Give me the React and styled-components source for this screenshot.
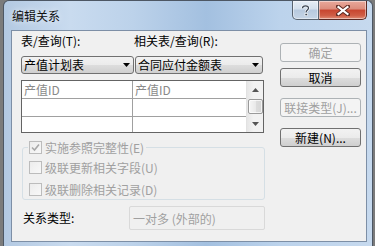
import React from "react";
import styled, { createGlobalStyle } from "styled-components";

const GlobalStyle = createGlobalStyle`
  html, body {
    margin: 0;
    padding: 0;
    width: 375px;
    height: 246px;
    overflow: hidden;
    background: #7b7b7b;
  }
  body {
    font-family: "Noto Sans CJK SC", "Liberation Sans", sans-serif;
    font-size: 12px;
    color: #000;
  }
  * { box-sizing: border-box; }
`;

const FONT = `"Noto Sans CJK SC", "Liberation Sans", sans-serif`;

const Window = styled.div`
  margin-left: 3px;
  width: 370px;
  height: 246px;
  border: 1px solid #4d5764;
  border-bottom: none;
  border-radius: 6px 6px 0 0;
  background: linear-gradient(
    to right,
    #b3c9e2 0%,
    #c9dbef 18%,
    #bcd2ea 35%,
    #a3c0e0 55%,
    #bcd3ec 75%,
    #c6d9ee 100%
  );
  display: flex;
  flex-direction: column;
  padding: 0 5px 0 7px;
`;

const TitleBar = styled.div`
  height: 29px;
  display: flex;
  align-items: flex-start;
  justify-content: space-between;
`;

const Title = styled.div`
  margin-top: 8px;
  margin-left: 1px;
  font-family: ${FONT};
  font-size: 12px;
  line-height: 14px;
  color: #111;
  text-shadow: 0 0 6px rgba(255, 255, 255, 0.9);
`;

const CaptionButtons = styled.div`
  display: flex;
  height: 19px;
`;

const CaptionButton = styled.div`
  width: ${(p) => p.$w}px;
  height: 19px;
  display: flex;
  align-items: center;
  justify-content: center;
  border: 1px solid ${(p) => (p.$close ? "#5a2a24" : "#59636f")};
  border-top: none;
  border-left: ${(p) => (p.$close ? "none" : undefined)};
  border-radius: ${(p) => (p.$close ? "0 0 5px 0" : "0 0 0 5px")};
  background: ${(p) =>
    p.$close
      ? "linear-gradient(to bottom, #e9a99b 0%, #dc8c7c 45%, #c8452f 50%, #cf5d45 80%, #e08d76 100%)"
      : "linear-gradient(to bottom, #e6edf5 0%, #d3dfec 45%, #b7c9de 50%, #c6d5e6 100%)"};
  box-shadow: inset 0 0 0 1px rgba(255, 255, 255, 0.45);
`;

const Client = styled.div`
  flex: 1;
  display: grid;
  grid-template-columns: 244px 81px;
  column-gap: 15px;
  align-items: start;
  padding-left: 9px;
  background: #f0f0f0;
  border: 1px solid #7d8fa6;
`;

const LeftColumn = styled.div`
  display: flex;
  flex-direction: column;
`;

const LabelRow = styled.div`
  height: 25px;
  padding-top: 3px;
  display: grid;
  grid-template-columns: 113px 1fr;
  line-height: 14px;
`;

const Label = styled.span`
  font-family: ${FONT};
  font-size: 12px;
  color: ${(p) => (p.$disabled ? "#a0a0a0" : "#000")};
  white-space: nowrap;
`;

const ComboRow = styled.div`
  display: grid;
  grid-template-columns: 113px 128px;
  column-gap: 1px;
  height: 18px;
`;

const Combo = styled.div`
  height: 18px;
  display: flex;
  align-items: center;
  justify-content: space-between;
  padding: 0 3px 0 2px;
  border: 1px solid #707070;
  border-radius: 3px;
  background: linear-gradient(to bottom, #f2f2f2 0%, #ebebeb 50%, #dddddd 51%, #cfcfcf 100%);
  font-family: ${FONT};
  font-size: 12px;
  line-height: 14px;
  white-space: nowrap;
`;

const Arrow = styled.svg`
  flex: none;
`;

const GridBox = styled.div`
  margin-top: 6px;
  width: 243px;
  height: 53px;
  border: 1px solid #646464;
  background: #fff;
  display: flex;
`;

const Table = styled.div`
  flex: 1;
  display: grid;
  grid-template-columns: 111px 1fr;
  grid-auto-rows: 18px;
  overflow: hidden;
`;

const Cell = styled.div`
  border-right: ${(p) => (p.$first ? "1px solid #a0a0a0" : "none")};
  border-bottom: 1px solid #a0a0a0;
  padding-left: 2px;
  font-family: ${FONT};
  font-size: 12px;
  line-height: 17px;
  color: #8a8a8a;
  white-space: nowrap;
`;

const ScrollBar = styled.div`
  width: 17px;
  display: flex;
  flex-direction: column;
  align-items: center;
  justify-content: space-between;
  background: linear-gradient(to right, #e6e6e6, #f2f2f2 40%, #f2f2f2);
  border-left: 1px solid #e2e2e2;
`;

const ScrollArrow = styled.div`
  height: 17px;
  display: flex;
  align-items: center;
  justify-content: center;
`;

const Thumb = styled.div`
  width: 15px;
  height: 15px;
  border: 1px solid #9a9a9a;
  border-radius: 2px;
  background: linear-gradient(to right, #f6f6f6, #e9e9e9 50%, #dcdcdc 51%, #d6d6d6);
  box-shadow: inset 0 0 0 1px rgba(255, 255, 255, 0.7);
`;

const Group = styled.fieldset`
  margin: 7px 0 0 1px;
  width: 243px;
  padding: 0 5px 3px 5px;
  border: 1px solid #d5dfe5;
  border-radius: 3px;
  min-width: 0;
`;

const Legend = styled.legend`
  padding: 0 2px 0 1px;
  height: 14px;
  display: flex;
  align-items: center;
`;

const CheckRow = styled.div`
  display: flex;
  align-items: center;
  height: 14px;
  margin-top: ${(p) => p.$mt}px;
  padding-left: 1px;
`;

const Box = styled.span`
  flex: none;
  width: 13px;
  height: 13px;
  margin-right: 3px;
  border: 1px solid #bcbcbc;
  background: linear-gradient(135deg, #ececec, #f8f8f8);
  display: flex;
  align-items: center;
  justify-content: center;
`;

const TypeRow = styled.div`
  margin-top: 6px;
  display: flex;
  align-items: center;
  height: 24px;
  padding-left: 2px;
`;

const TypeLabel = styled.span`
  width: 106px;
  font-family: ${FONT};
  font-size: 12px;
  line-height: 14px;
  white-space: nowrap;
`;

const ReadOnlyField = styled.div`
  width: 136px;
  height: 24px;
  border: 1px solid #d9d9d9;
  border-radius: 2px;
  background: #f0f0f0;
  display: flex;
  align-items: center;
  padding-left: 3px;
  font-family: ${FONT};
  font-size: 12px;
  color: #a0a0a0;
  white-space: nowrap;
`;

const RightColumn = styled.div`
  display: flex;
  flex-direction: column;
  padding-top: 12px;
`;

const Button = styled.div`
  height: 19px;
  margin-top: ${(p) => p.$mt || 0}px;
  display: flex;
  align-items: center;
  justify-content: center;
  border: 1px solid ${(p) => (p.$disabled ? "#adb2b5" : "#707070")};
  border-radius: 3px;
  background: ${(p) =>
    p.$disabled
      ? "#f4f4f4"
      : "linear-gradient(to bottom, #f2f2f2 0%, #ebebeb 50%, #dddddd 51%, #cfcfcf 100%)"};
  font-family: ${FONT};
  font-size: 12px;
  line-height: 14px;
  color: ${(p) => (p.$disabled ? "#a0a0a0" : "#000")};
  white-space: nowrap;
`;

const BottomFrame = styled.div`
  height: 4px;
`;

const DownTri = ({ color = "#000", w = 7 }) => (
  <Arrow width={w} height="4" viewBox="0 0 7 4">
    <path d="M0 0 H7 L3.5 4 Z" fill={color} />
  </Arrow>
);

const UpTri = ({ color = "#555" }) => (
  <svg width="7" height="4" viewBox="0 0 7 4">
    <path d="M0 4 H7 L3.5 0 Z" fill={color} />
  </svg>
);

const CheckBox = ({ checked }) => (
  <Box>
    {checked && (
      <svg width="9" height="9" viewBox="0 0 9 9">
        <path d="M1 4.5 L3.5 7 L8 1.5" stroke="#a8a8a8" strokeWidth="1.6" fill="none" />
      </svg>
    )}
  </Box>
);

export default function App() {
  return (
    <>
      <GlobalStyle />
      <Window>
        <TitleBar>
          <Title>编辑关系</Title>
          <CaptionButtons>
            <CaptionButton $w={27}>
              <svg width="9" height="11" viewBox="0 0 9 11">
                <path
                  d="M1.5 3.2 C1.5 1.3 3 0.8 4.5 0.8 C6.3 0.8 7.5 1.8 7.5 3.2 C7.5 4.8 5.2 5 5.2 6.8 V7.3"
                  stroke="#fff"
                  strokeWidth="2.6"
                  fill="none"
                />
                <path
                  d="M1.5 3.2 C1.5 1.3 3 0.8 4.5 0.8 C6.3 0.8 7.5 1.8 7.5 3.2 C7.5 4.8 5.2 5 5.2 6.8 V7.3"
                  stroke="#3c4654"
                  strokeWidth="1.3"
                  fill="none"
                />
                <rect x="4" y="8.5" width="2.4" height="2.2" fill="#3c4654" stroke="#fff" strokeWidth="0.6" />
              </svg>
            </CaptionButton>
            <CaptionButton $w={48} $close>
              <svg width="14" height="11" viewBox="0 0 14 11">
                <path d="M2 1.5 L12 9.5 M12 1.5 L2 9.5" stroke="#5e2a22" strokeWidth="4" strokeLinecap="square" />
                <path d="M2.5 2 L11.5 9 M11.5 2 L2.5 9" stroke="#fff" strokeWidth="2.2" strokeLinecap="square" />
              </svg>
            </CaptionButton>
          </CaptionButtons>
        </TitleBar>

        <Client>
          <LeftColumn>
            <LabelRow>
              <Label>表/查询(T):</Label>
              <Label>相关表/查询(R):</Label>
            </LabelRow>
            <ComboRow>
              <Combo>
                <span>产值计划表</span>
                <DownTri />
              </Combo>
              <Combo>
                <span>合同应付金额表</span>
                <DownTri />
              </Combo>
            </ComboRow>
            <GridBox>
              <Table>
                <Cell $first>产值ID</Cell>
                <Cell>产值ID</Cell>
                <Cell $first />
                <Cell />
                <Cell $first />
                <Cell />
              </Table>
              <ScrollBar>
                <ScrollArrow>
                  <UpTri />
                </ScrollArrow>
                <Thumb />
                <ScrollArrow>
                  <DownTri color="#555" />
                </ScrollArrow>
              </ScrollBar>
            </GridBox>
            <Group>
              <Legend>
                <CheckBox checked />
                <Label $disabled>实施参照完整性(E)</Label>
              </Legend>
              <CheckRow $mt={6}>
                <CheckBox />
                <Label $disabled>级联更新相关字段(U)</Label>
              </CheckRow>
              <CheckRow $mt={8}>
                <CheckBox />
                <Label $disabled>级联删除相关记录(D)</Label>
              </CheckRow>
            </Group>
            <TypeRow>
              <TypeLabel>关系类型:</TypeLabel>
              <ReadOnlyField>一对多 (外部的)</ReadOnlyField>
            </TypeRow>
          </LeftColumn>

          <RightColumn>
            <Button $disabled>确定</Button>
            <Button $mt={6}>取消</Button>
            <Button $mt={11} $disabled>联接类型(J)...</Button>
            <Button $mt={11}>新建(N)...</Button>
          </RightColumn>
        </Client>
        <BottomFrame />
      </Window>
    </>
  );
}
